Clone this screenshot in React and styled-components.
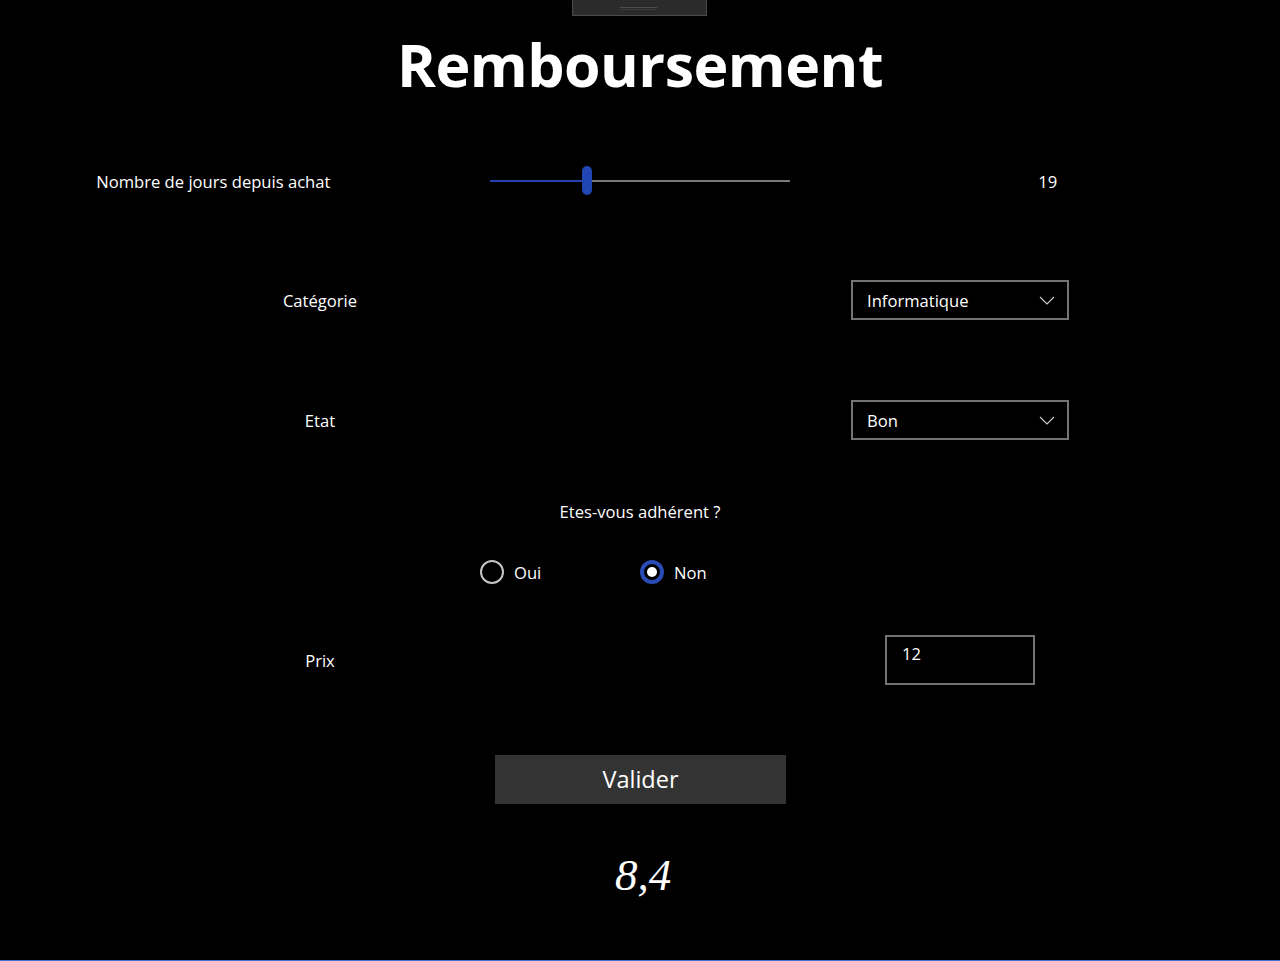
import React, { useState } from "react";
import styled, { createGlobalStyle } from "styled-components";

const GlobalStyle = createGlobalStyle`
  html, body {
    margin: 0;
    padding: 0;
    background: #000;
  }
  body {
    font-family: "Open Sans", "Noto Sans", sans-serif;
    color: #fff;
  }
`;

const Page = styled.div`
  position: relative;
  width: 1280px;
  height: 961px;
  background: #000;
  overflow: hidden;
  display: flex;
  flex-direction: column;
  border-bottom: 1px solid #3d6fd6;
  box-sizing: border-box;
`;

const DragHandle = styled.div`
  position: absolute;
  top: 0;
  left: 572px;
  width: 133px;
  height: 15px;
  background: #2b2b2b;
  border: 1px solid #4a4a4a;
  border-top: none;

  &::after {
    content: "";
    position: absolute;
    left: 47px;
    top: 7px;
    width: 37px;
    height: 1px;
    border-top: 1px solid #4e4e4e;
    border-bottom: 1px solid #3c3c3c;
  }
`;

const Header = styled.div`
  height: 151px;
  display: flex;
  justify-content: center;
`;

const Title = styled.h1`
  margin: 35px 0 0;
  font-size: 59px;
  line-height: 1;
  font-weight: 700;
  letter-spacing: -0.5px;
  color: #fff;
`;

const SliderRow = styled.div`
  height: 60px;
  display: grid;
  grid-template-columns: repeat(3, 1fr);
  align-items: center;
`;

const FieldRow = styled.div`
  height: ${(p) => p.$height || 60}px;
  margin-top: ${(p) => p.$gap}px;
  display: grid;
  grid-template-columns: 1fr 1fr;
  align-items: center;
`;

const Label = styled.span`
  justify-self: center;
  font-size: 16.6px;
  color: #fff;
`;

const Value = styled.span`
  justify-self: center;
  padding-right: 38px;
  font-size: 16.6px;
`;

const SliderBox = styled.div`
  position: relative;
  justify-self: center;
  width: 300px;
  height: 30px;
  margin-left: 1px;
`;

const Track = styled.div`
  position: absolute;
  left: 0;
  right: 0;
  top: 14px;
  height: 2px;
  background: #7a7a7a;
`;

const TrackFill = styled.div`
  position: absolute;
  left: 0;
  top: 14px;
  height: 2px;
  background: #2142b0;
`;

const Thumb = styled.div`
  position: absolute;
  top: 0;
  width: 10px;
  height: 29px;
  border-radius: 5px;
  background: #2146b4;
`;

const Combo = styled.div`
  justify-self: center;
  width: 218px;
  height: 40px;
  box-sizing: border-box;
  border: 2px solid #737373;
  display: flex;
  align-items: center;
  justify-content: space-between;
  padding: 0 12px 0 14px;
  font-size: 16.6px;
  color: #fff;
`;

const Chevron = () => (
  <svg width="16" height="9" viewBox="0 0 16 9">
    <path d="M1 1 L8 8 L15 1" fill="none" stroke="#cfcfcf" strokeWidth="1.1" />
  </svg>
);

const Question = styled.div`
  margin-top: 41px;
  height: 40px;
  display: flex;
  align-items: center;
  justify-content: center;
  font-size: 16.6px;
`;

const RadioGroup = styled.div`
  margin-top: 21px;
  height: 40px;
  display: flex;
  justify-content: center;
  align-items: center;
`;

const RadioItem = styled.label`
  width: 160px;
  display: flex;
  align-items: center;
  gap: 10px;
  font-size: 16.6px;
  cursor: pointer;
`;

const RadioCircle = styled.span`
  width: 24px;
  height: 24px;
  box-sizing: border-box;
  border-radius: 50%;
  border: ${(p) => (p.$checked ? "4px solid #2a4bb5" : "2px solid #c4c4c4")};
  display: flex;
  align-items: center;
  justify-content: center;

  &::after {
    content: "";
    display: ${(p) => (p.$checked ? "block" : "none")};
    width: 10px;
    height: 10px;
    border-radius: 50%;
    background: #fff;
  }
`;

const TextBox = styled.div`
  justify-self: center;
  width: 150px;
  height: 50px;
  box-sizing: border-box;
  border: 2px solid #737373;
  padding: 7px 0 0 15px;
  font-size: 16.6px;
  line-height: 20px;
`;

const ButtonRow = styled.div`
  margin-top: 70px;
  display: flex;
  justify-content: center;
`;

const Button = styled.button`
  width: 291px;
  height: 49px;
  margin-left: 1px;
  border: none;
  background: #333333;
  color: #fff;
  font-family: "Open Sans", "Noto Sans", sans-serif;
  font-size: 23.5px;
  padding: 0 0 1px;
`;

const Result = styled.div`
  margin-top: 46px;
  height: 50px;
  display: flex;
  justify-content: center;
  align-items: center;
  padding-left: 6px;
  font-family: "Liberation Serif", "Times New Roman", serif;
  font-style: italic;
  font-size: 45px;
`;

export default function App() {
  const [days] = useState(19);
  const [member, setMember] = useState("non");
  const max = 60;
  const thumbLeft = (days / max) * (300 - 10);

  return (
    <Page>
      <GlobalStyle />
      <DragHandle />
      <Header>
        <Title>Remboursement</Title>
      </Header>

      <SliderRow>
        <Label>Nombre de jours depuis achat</Label>
        <SliderBox>
          <Track />
          <TrackFill style={{ width: thumbLeft + 5 }} />
          <Thumb style={{ left: thumbLeft }} />
        </SliderBox>
        <Value>{days}</Value>
      </SliderRow>

      <FieldRow $gap={59}>
        <Label>Catégorie</Label>
        <Combo>
          <span>Informatique</span>
          <Chevron />
        </Combo>
      </FieldRow>

      <FieldRow $gap={60}>
        <Label>Etat</Label>
        <Combo>
          <span>Bon</span>
          <Chevron />
        </Combo>
      </FieldRow>

      <Question>Etes-vous adhérent ?</Question>

      <RadioGroup>
        <RadioItem onClick={() => setMember("oui")}>
          <RadioCircle $checked={member === "oui"} />
          Oui
        </RadioItem>
        <RadioItem onClick={() => setMember("non")}>
          <RadioCircle $checked={member === "non"} />
          Non
        </RadioItem>
      </RadioGroup>

      <FieldRow $gap={43} $height={50}>
        <Label>Prix</Label>
        <TextBox>12</TextBox>
      </FieldRow>

      <ButtonRow>
        <Button>Valider</Button>
      </ButtonRow>

      <Result>8,4</Result>
    </Page>
  );
}
